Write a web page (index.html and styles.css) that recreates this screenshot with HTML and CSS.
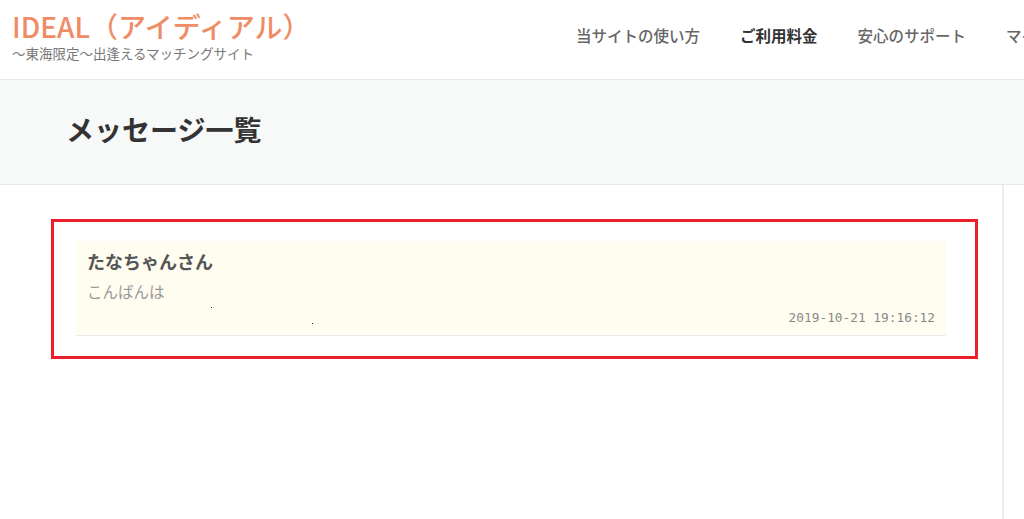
FILE: index.html
```html
<!DOCTYPE html>
<html lang="ja">
<head>
  <meta charset="UTF-8">
  <title>メッセージ一覧 | IDEAL（アイディアル）</title>
  <link rel="stylesheet" href="styles.css">
</head>
<body>
<header class="header">
  <div class="logo">
    <div class="logo-title">IDEAL（アイディアル）</div>
    <div class="logo-sub">～東海限定～出逢えるマッチングサイト</div>
  </div>
  <nav class="nav">
    <a href="#">当サイトの使い方</a>
    <a href="#" class="current">ご利用料金</a>
    <a href="#">安心のサポート</a>
    <a href="#">マイページ</a>
  </nav>
</header>

<div class="page-title">
  <h1>メッセージ一覧</h1>
</div>

<div class="wrap">
  <main class="main">
    <div class="mark">
      <div class="message">
        <div class="message-name">たなちゃんさん</div>
        <div class="message-body">こんばんは</div>
        <div class="message-date">2019-10-21 19:16:12</div>
        <span class="dot dot1"></span>
        <span class="dot dot2"></span>
      </div>
    </div>
  </main>
  <aside class="side"></aside>
</div>
</body>
</html>
```

FILE: styles.css
```css
body {
  margin: 0;
  font-family: "Noto Sans CJK JP", "Noto Sans", sans-serif;
  color: #333;
  background: #fff;
  overflow: hidden;
}
a {
  text-decoration: none;
}
.header {
  height: 79px;
  border-bottom: 1px solid #e8e8e8;
  display: grid;
  grid-template-columns: 576px 1fr;
  white-space: nowrap;
  overflow: hidden;
}
.logo {
  padding: 8px 0 0 12px;
}
.logo-title {
  font-family: "Noto Sans CJK JP", "Noto Sans", sans-serif;
  font-size: 28px;
  line-height: 36px;
  font-weight: 500;
  color: #ef8b65;
}
.logo-sub {
  font-size: 13.5px;
  line-height: 18px;
  color: #777;
}
.nav {
  display: flex;
  gap: 40px;
  padding-top: 24px;
  overflow: hidden;
}
.nav a {
  font-size: 15.5px;
  line-height: 22px;
  color: #666;
  font-weight: 500;
  flex-shrink: 0;
}
.nav a.current {
  color: #333;
  font-weight: 700;
}
.page-title {
  height: 104px;
  background: #f7f8f8;
  border-bottom: 1px solid #e6e6e6;
  display: flex;
  align-items: center;
}
.page-title h1 {
  margin: 0 0 0 66px;
  font-size: 28px;
  line-height: 40px;
  font-weight: 700;
  color: #333;
  padding-bottom: 6px;
}
.wrap {
  display: flex;
  height: 334px;
}
.main {
  width: 1002px;
  padding: 34px 24px 0 51px;
  box-sizing: border-box;
}
.side {
  border-left: 2px solid #ececec;
  flex: 1;
}
.mark {
  border: 3px solid #ec1f2b;
  padding: 19px 29px 20px 22px;
}
.message {
  position: relative;
  background: #fffcf0;
  border-bottom: 1px solid #eaeaea;
  padding: 8px 11px 7px 11px;
}
.message-name {
  font-size: 18px;
  line-height: 24px;
  font-weight: 700;
  color: #555;
}
.message-body {
  font-size: 15.5px;
  line-height: 24px;
  color: #999;
  margin-top: 6px;
}
.message-date {
  font-family: "DejaVu Sans Mono", monospace;
  font-size: 12.8px;
  line-height: 20px;
  color: #888;
  text-align: right;
  margin-top: 5px;
}
.dot {
  position: absolute;
  width: 1px;
  height: 1px;
  background: #222;
}
.dot1 {
  left: 135px;
  top: 66px;
}
.dot2 {
  left: 236px;
  top: 82px;
}
```
